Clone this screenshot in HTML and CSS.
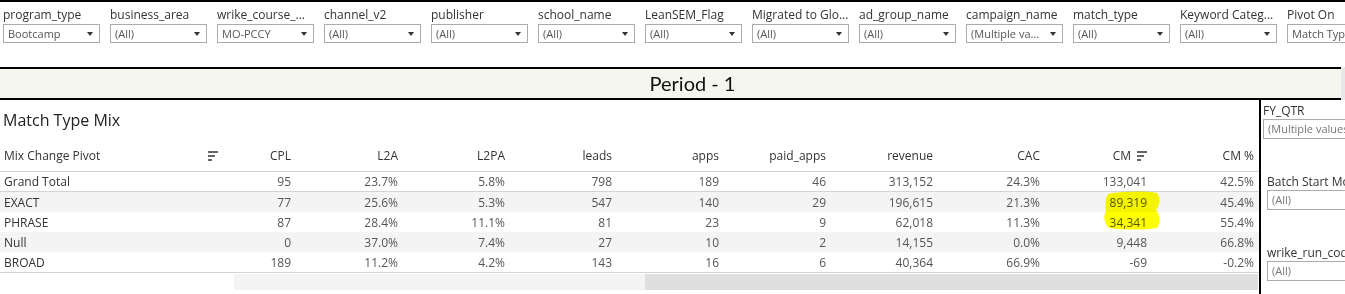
FILE: index.html
```html
<!DOCTYPE html>
<html lang="en">
<head>
    <meta charset="UTF-8">
    <meta name="viewport" content="width=device-width, initial-scale=1.0">
    <title>Match Type Mix</title>
<link rel="stylesheet" href="styles.css">
</head>
<body>

    <div class="filters">
        <div class="filter">
            <div class="filter-label">program_type</div>
            <div class="dropdown"><span>Bootcamp</span><i class="arrow"></i></div>
        </div>
        <div class="filter">
            <div class="filter-label">business_area</div>
            <div class="dropdown"><span>(All)</span><i class="arrow"></i></div>
        </div>
        <div class="filter">
            <div class="filter-label">wrike_course_...</div>
            <div class="dropdown"><span>MO-PCCY</span><i class="arrow"></i></div>
        </div>
        <div class="filter">
            <div class="filter-label">channel_v2</div>
            <div class="dropdown"><span>(All)</span><i class="arrow"></i></div>
        </div>
        <div class="filter">
            <div class="filter-label">publisher</div>
            <div class="dropdown"><span>(All)</span><i class="arrow"></i></div>
        </div>
        <div class="filter">
            <div class="filter-label">school_name</div>
            <div class="dropdown"><span>(All)</span><i class="arrow"></i></div>
        </div>
        <div class="filter">
            <div class="filter-label">LeanSEM_Flag</div>
            <div class="dropdown"><span>(All)</span><i class="arrow"></i></div>
        </div>
        <div class="filter">
            <div class="filter-label">Migrated to Glo...</div>
            <div class="dropdown"><span>(All)</span><i class="arrow"></i></div>
        </div>
        <div class="filter">
            <div class="filter-label">ad_group_name</div>
            <div class="dropdown"><span>(All)</span><i class="arrow"></i></div>
        </div>
        <div class="filter">
            <div class="filter-label">campaign_name</div>
            <div class="dropdown"><span>(Multiple va...</span><i class="arrow"></i></div>
        </div>
        <div class="filter">
            <div class="filter-label">match_type</div>
            <div class="dropdown"><span>(All)</span><i class="arrow"></i></div>
        </div>
        <div class="filter">
            <div class="filter-label">Keyword Categ...</div>
            <div class="dropdown"><span>(All)</span><i class="arrow"></i></div>
        </div>
        <div class="filter">
            <div class="filter-label">Pivot On</div>
            <div class="dropdown"><span>Match Type</span><i class="arrow"></i></div>
        </div>
    </div>

    <div class="banner-row">
        <div class="banner">Period - 1</div>
        <div class="banner-scroll"></div>
    </div>

    <div class="main">
        <div class="mix">
            <div class="mix-title">Match Type Mix</div>

            <div class="grid-row head">
                <div class="c name pivot">Mix Change Pivot <span class="sort"><i></i><i></i><i></i></span></div>
                <div class="c">CPL</div>
                <div class="c">L2A</div>
                <div class="c">L2PA</div>
                <div class="c">leads</div>
                <div class="c">apps</div>
                <div class="c">paid_apps</div>
                <div class="c">revenue</div>
                <div class="c">CAC</div>
                <div class="c cm">CM <span class="sort"><i></i><i></i><i></i></span></div>
                <div class="c">CM %</div>
            </div>

            <div class="grid-row row total">
                <div class="c name">Grand Total</div>
                <div class="c">95</div><div class="c">23.7%</div><div class="c">5.8%</div>
                <div class="c">798</div><div class="c">189</div><div class="c">46</div>
                <div class="c">313,152</div><div class="c">24.3%</div><div class="c">133,041</div>
                <div class="c">42.5%</div>
            </div>
            <div class="grid-row row alt">
                <div class="c name">EXACT</div>
                <div class="c">77</div><div class="c">25.6%</div><div class="c">5.3%</div>
                <div class="c">547</div><div class="c">140</div><div class="c">29</div>
                <div class="c">196,615</div><div class="c">21.3%</div><div class="c">89,319</div>
                <div class="c">45.4%</div>
            </div>
            <div class="grid-row row">
                <div class="c name">PHRASE</div>
                <div class="c">87</div><div class="c">28.4%</div><div class="c">11.1%</div>
                <div class="c">81</div><div class="c">23</div><div class="c">9</div>
                <div class="c">62,018</div><div class="c">11.3%</div><div class="c">34,341</div>
                <div class="c">55.4%</div>
            </div>
            <div class="grid-row row alt">
                <div class="c name">Null</div>
                <div class="c">0</div><div class="c">37.0%</div><div class="c">7.4%</div>
                <div class="c">27</div><div class="c">10</div><div class="c">2</div>
                <div class="c">14,155</div><div class="c">0.0%</div><div class="c">9,448</div>
                <div class="c">66.8%</div>
            </div>
            <div class="grid-row row last">
                <div class="c name">BROAD</div>
                <div class="c">189</div><div class="c">11.2%</div><div class="c">4.2%</div>
                <div class="c">143</div><div class="c">16</div><div class="c">6</div>
                <div class="c">40,364</div><div class="c">66.9%</div><div class="c">-69</div>
                <div class="c">-0.2%</div>
            </div>

            <div class="hscroll"><div class="thumb"></div></div>

            <svg class="marker" width="62" height="42" viewBox="0 0 62 42">
                <path d="M7,4 C22,1 44,1 56,3 C60,8 59,14 55,20 C59,25 59,33 56,38 C42,40 22,40 8,38 C3,33 2,26 5,21 C4,15 4,9 7,4 Z"/>
            </svg>
        </div>

        <div class="divider"></div>

        <div class="side">
            <div class="side-group">
                <div class="side-label">FY_QTR</div>
                <div class="side-drop">(Multiple values)</div>
            </div>
            <div class="side-group inset">
                <div class="side-label">Batch Start Month</div>
                <div class="side-drop">(All)</div>
            </div>
            <div class="side-group inset">
                <div class="side-label">wrike_run_code</div>
                <div class="side-drop">(All)</div>
            </div>
        </div>
    </div>

</body>
</html>
```

FILE: styles.css
```css
* {
    padding: 0;
    margin: 0;
    box-sizing: border-box;
}

body {
    width: 1345px;
    height: 294px;
    overflow: hidden;
    font-family: "Open Sans", sans-serif;
    font-size: 12px;
    color: #333;
    background: #fff;
}

/* filter bar */
.filters {
    display: flex;
    gap: 10px;
    height: 67px;
    padding: 5px 3px 0;
    border-top: 2px solid #000;
}

.filter {
    flex: none;
    width: 97px;
}

.filter-label {
    height: 17px;
    line-height: 16px;
    white-space: nowrap;
    overflow: hidden;
}

.dropdown {
    height: 19px;
    border: 1px solid #ababab;
    display: flex;
    align-items: center;
    justify-content: space-between;
    padding: 0 6px 0 4px;
    font-size: 11px;
    color: #555;
    white-space: nowrap;
    overflow: hidden;
}

.arrow {
    border-left: 3px solid transparent;
    border-right: 3px solid transparent;
    border-top: 4px solid #333;
}

/* period banner */
.banner-row {
    display: flex;
}

.banner {
    flex: 1;
    height: 33px;
    border-top: 2px solid #000;
    border-bottom: 2px solid #000;
    background: #f5f7ee;
    padding-left: 44px;
    font-family: Lato, sans-serif;
    font-size: 20px;
    line-height: 29px;
    text-align: center;
    color: #111;
}

.banner-scroll {
    width: 4px;
    background: #e8e8e8;
}

/* main area */
.main {
    display: flex;
    height: 194px;
}

.mix {
    flex: none;
    width: 1259px;
    position: relative;
}

.divider {
    width: 2px;
    background: #000;
}

.mix-title {
    height: 40px;
    line-height: 40px;
    padding-left: 3px;
    font-size: 16px;
    color: #222;
}

.grid-row {
    display: grid;
    grid-template-columns: 220px 74px repeat(9, 107px);
    align-items: center;
}

.head {
    height: 32px;
    border-bottom: 1px solid #d4d4d4;
}

.row {
    height: 20px;
}

.row.total {
    border-bottom: 1px solid #d4d4d4;
}

.row.alt {
    background: #f4f4f4;
}

.row.last {
    height: 21px;
    border-bottom: 1px solid #d4d4d4;
}

.c {
    text-align: right;
    padding-right: 3px;
    color: #555;
    white-space: nowrap;
}

.head .c {
    color: #333;
}

.c.name {
    text-align: left;
    padding-left: 4px;
    color: #333;
}

.pivot {
    display: flex;
    align-items: center;
    justify-content: space-between;
    padding-right: 2px;
}

.cm {
    display: flex;
    align-items: center;
    justify-content: flex-end;
    gap: 6px;
}

.sort {
    display: inline-flex;
    flex-direction: column;
    gap: 2px;
}

.sort i {
    display: block;
    height: 2px;
    background: #666;
}

.sort i:nth-child(1) { width: 10px; }
.sort i:nth-child(2) { width: 7px; }
.sort i:nth-child(3) { width: 4px; }

.hscroll {
    margin: 1px 0 0 234px;
    width: 1024px;
    height: 16px;
    background: #f4f4f4;
    display: flex;
    justify-content: flex-end;
}

.thumb {
    width: 613px;
    background: #dfdfdf;
}

/* yellow highlighter stroke drawn over the CM cells */
.marker {
    position: absolute;
    left: 1101px;
    top: 90px;
    mix-blend-mode: multiply;
}

.marker path {
    fill: #ffff00;
}

/* right filter column */
.side {
    flex: 1;
    overflow: hidden;
    padding: 3px 0 0 2px;
}

.side-group + .side-group {
    margin-top: 35px;
}

.side-group.inset {
    padding-left: 4px;
}

.side-label {
    line-height: 16px;
    white-space: nowrap;
}

.side-drop {
    width: 120px;
    height: 20px;
    border: 1px solid #ababab;
    padding-left: 4px;
    line-height: 18px;
    font-size: 11px;
    color: #777;
    white-space: nowrap;
}
```
